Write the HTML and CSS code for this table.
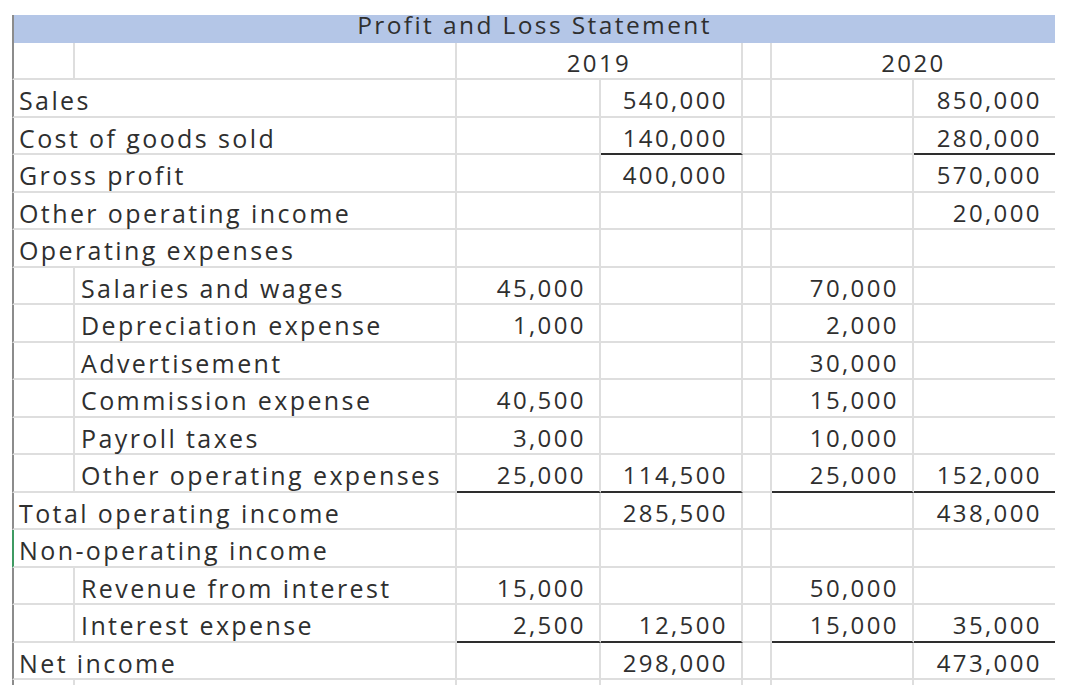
FILE: index.html
```html
<!DOCTYPE html>
<html lang="en">
<head>
<meta charset="utf-8">
<title>Profit and Loss Statement</title>
<link rel="stylesheet" href="styles.css">
</head>
<body>
<div class="sheet">
  <div class="title">Profit and Loss Statement</div>

  <div class="c first"></div><div class="c"></div><div class="c yr">2019</div><div class="c"></div><div class="c yr end">2020</div>

  <div class="c first wide">Sales</div><div class="c num"></div><div class="c num">540,000</div><div class="c"></div><div class="c num"></div><div class="c num end">850,000</div>
  <div class="c first wide">Cost of goods sold</div><div class="c num"></div><div class="c num ul">140,000</div><div class="c"></div><div class="c num"></div><div class="c num end ul">280,000</div>
  <div class="c first wide">Gross profit</div><div class="c num"></div><div class="c num">400,000</div><div class="c"></div><div class="c num"></div><div class="c num end">570,000</div>
  <div class="c first wide">Other operating income</div><div class="c num"></div><div class="c num"></div><div class="c"></div><div class="c num"></div><div class="c num end">20,000</div>
  <div class="c first wide">Operating expenses</div><div class="c num"></div><div class="c num"></div><div class="c"></div><div class="c num"></div><div class="c num end"></div>

  <div class="c first"></div><div class="c in">Salaries and wages</div><div class="c num">45,000</div><div class="c num"></div><div class="c"></div><div class="c num">70,000</div><div class="c num end"></div>
  <div class="c first"></div><div class="c in">Depreciation expense</div><div class="c num">1,000</div><div class="c num"></div><div class="c"></div><div class="c num">2,000</div><div class="c num end"></div>
  <div class="c first"></div><div class="c in">Advertisement</div><div class="c num"></div><div class="c num"></div><div class="c"></div><div class="c num">30,000</div><div class="c num end"></div>
  <div class="c first"></div><div class="c in">Commission expense</div><div class="c num">40,500</div><div class="c num"></div><div class="c"></div><div class="c num">15,000</div><div class="c num end"></div>
  <div class="c first"></div><div class="c in">Payroll taxes</div><div class="c num">3,000</div><div class="c num"></div><div class="c"></div><div class="c num">10,000</div><div class="c num end"></div>
  <div class="c first"></div><div class="c in">Other operating expenses</div><div class="c num ul">25,000</div><div class="c num ul">114,500</div><div class="c"></div><div class="c num ul">25,000</div><div class="c num end ul">152,000</div>

  <div class="c first wide">Total operating income</div><div class="c num"></div><div class="c num">285,500</div><div class="c"></div><div class="c num"></div><div class="c num end">438,000</div>
  <div class="c first wide sel">Non-operating income</div><div class="c num"></div><div class="c num"></div><div class="c"></div><div class="c num"></div><div class="c num end"></div>

  <div class="c first"></div><div class="c in">Revenue from interest</div><div class="c num">15,000</div><div class="c num"></div><div class="c"></div><div class="c num">50,000</div><div class="c num end"></div>
  <div class="c first"></div><div class="c in">Interest expense</div><div class="c num ul">2,500</div><div class="c num ul">12,500</div><div class="c"></div><div class="c num ul">15,000</div><div class="c num end ul">35,000</div>

  <div class="c first wide">Net income</div><div class="c num"></div><div class="c num">298,000</div><div class="c"></div><div class="c num"></div><div class="c num end">473,000</div>

  <div class="c first stub"></div><div class="c stub"></div><div class="c stub"></div><div class="c stub"></div><div class="c stub"></div><div class="c stub"></div><div class="c stub end"></div>
</div>
</body>
</html>
```

FILE: styles.css
```css
html, body {
  margin: 0;
  padding: 0;
  background: #ffffff;
  overflow: hidden;
}

.sheet {
  display: grid;
  grid-template-columns: 63px 382px 144px 142px 29px 142px 141px;
  grid-template-rows: 28px 37px repeat(16, 37.5px) 5px;
  width: 1043px;
  margin: 15px 0 0 12px;
  font-family: "Open Sans", "Liberation Sans", sans-serif;
  font-size: 24px;
  font-weight: 500;
  line-height: 24px;
  letter-spacing: 2.4px;
  color: #2f2f2f;
}

.title {
  grid-column: 1 / -1;
  background: #b4c6e7;
  border-left: 2px solid #8c8c8c;
  text-align: center;
  font-size: 24.5px;
  line-height: 20px;
  white-space: nowrap;
}

.c {
  box-sizing: border-box;
  border-right: 2px solid #dedede;
  border-bottom: 2px solid #dedede;
  padding-top: 8px;
  white-space: nowrap;
}

.first {
  border-left: 2px solid #8c8c8c;
}

.wide {
  grid-column: span 2;
  padding-left: 5px;
  font-size: 25px;
}

.in {
  padding-left: 6px;
  font-size: 25px;
}

.num {
  text-align: right;
  padding-right: 13px;
}

.yr {
  grid-column: span 2;
  text-align: center;
}

.end {
  border-right: none;
}

.ul {
  border-bottom-color: #2e2e2e;
}

.sel {
  border-left-color: #3f9a62;
}

.stub {
  border-bottom: none;
  padding: 0;
}
```
